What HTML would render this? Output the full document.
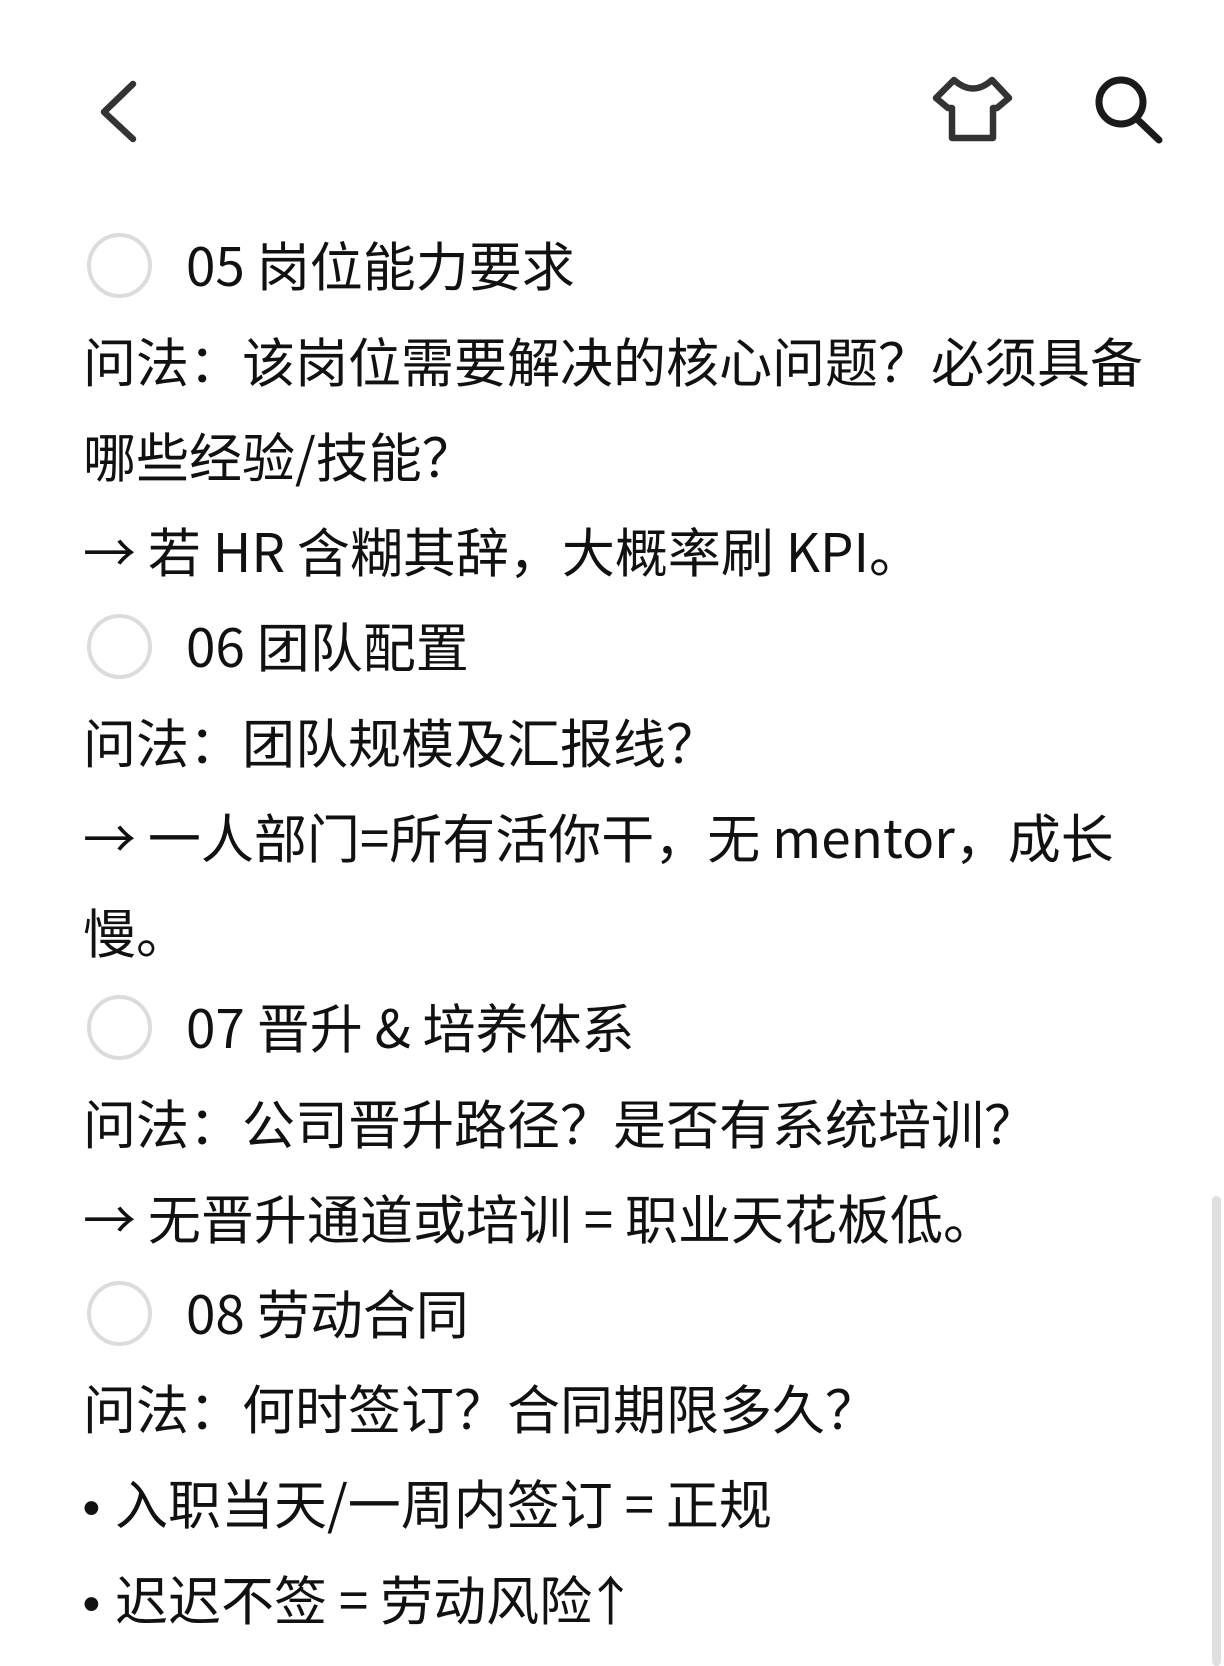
<!DOCTYPE html>
<html><head><meta charset="utf-8"><style>
html,body{margin:0;padding:0;background:#fff;}
body{width:1224px;height:1632px;overflow:hidden;position:relative;font-family:"Liberation Sans","Noto Sans CJK SC",sans-serif;color:#111;}
.l{position:absolute;left:83px;height:95px;line-height:95px;font-size:53px;white-space:nowrap;font-family:"Noto Sans CJK SC","Liberation Sans",sans-serif;}
.t{left:186px;}
.c{position:absolute;left:87px;width:57px;height:57px;border:4px solid #dcdcdc;border-radius:50%;}
.b{font-family:"Liberation Sans",sans-serif;font-size:48px;font-weight:bold;display:inline-block;width:32px;}
.sb{position:absolute;left:1212px;top:1196px;width:9px;height:470px;background:#e0e0e0;border-radius:5px;}
</style></head><body>
<svg width="1224" height="160" style="position:absolute;left:0;top:0">
<polyline points="133,84 104,112 133,139" fill="none" stroke="#333" stroke-width="6.5" stroke-linecap="round" stroke-linejoin="round"/>
<path d="M954,80 Q973,97 992,80 L1009,98 L997,108 L993,108 L993,138 L952,138 L952,108 L948,108 L936,98 Z" fill="none" stroke="#333" stroke-width="6.5" stroke-linejoin="round"/>
<circle cx="1121" cy="102" r="22" fill="none" stroke="#1a1a1a" stroke-width="7"/>
<line x1="1137" y1="119" x2="1159" y2="140" stroke="#1a1a1a" stroke-width="7" stroke-linecap="round"/>
</svg>
<div class="c" style="top:233px"></div>
<div class="l t" style="top:217px">05 岗位能力要求</div>
<div class="l" style="top:313px">问法：该岗位需要解决的核心问题？必须具备</div>
<div class="l" style="top:408px">哪些经验/技能？</div>
<div class="l" style="top:503px">→ 若 HR 含糊其辞，大概率刷 KPI。</div>
<div class="c" style="top:614px"></div>
<div class="l t" style="top:598px">06 团队配置</div>
<div class="l" style="top:694px">问法：团队规模及汇报线？</div>
<div class="l" style="top:789px">→ 一人部门=所有活你干，无 mentor，成长</div>
<div class="l" style="top:884px">慢。</div>
<div class="c" style="top:995px"></div>
<div class="l t" style="top:979px">07 晋升 &amp; 培养体系</div>
<div class="l" style="top:1075px">问法：公司晋升路径？是否有系统培训？</div>
<div class="l" style="top:1170px">→ 无晋升通道或培训 = 职业天花板低。</div>
<div class="c" style="top:1281px"></div>
<div class="l t" style="top:1265px">08 劳动合同</div>
<div class="l" style="top:1360px">问法：何时签订？合同期限多久？</div>
<div class="l" style="top:1455px"><span class="b">•</span>入职当天/一周内签订 = 正规</div>
<div class="l" style="top:1551px"><span class="b">•</span>迟迟不签 = 劳动风险<span style="display:inline-block;margin-left:-8px">↑</span></div>
<div class="sb"></div>
</body></html>
